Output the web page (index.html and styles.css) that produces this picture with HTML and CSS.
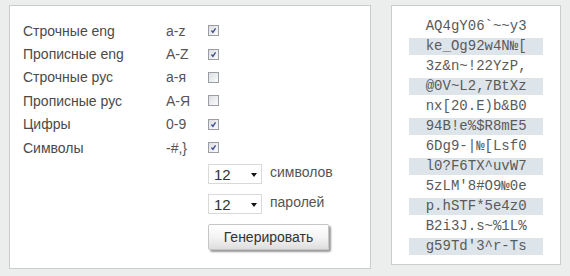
FILE: index.html
```html
<!DOCTYPE html>
<html lang="ru">
<head>
  <meta charset="UTF-8">
  <title>Генератор паролей</title>
  <link rel="stylesheet" href="styles.css">
</head>
<body>

  <div class="page">
    <!-- Settings -->
    <div class="panel settings">
      <div class="options">
        <span class="label">Строчные eng</span><span class="range">a-z</span>
        <span class="check checked"><svg viewBox="0 0 11 11"><path d="M3 5.5 L4.8 7.8 L8 2.8" /></svg></span>

        <span class="label">Прописные eng</span><span class="range">A-Z</span>
        <span class="check checked"><svg viewBox="0 0 11 11"><path d="M3 5.5 L4.8 7.8 L8 2.8" /></svg></span>

        <span class="label">Строчные рус</span><span class="range">а-я</span>
        <span class="check"></span>

        <span class="label">Прописные рус</span><span class="range">А-Я</span>
        <span class="check"></span>

        <span class="label">Цифры</span><span class="range">0-9</span>
        <span class="check checked"><svg viewBox="0 0 11 11"><path d="M3 5.5 L4.8 7.8 L8 2.8" /></svg></span>

        <span class="label">Символы</span><span class="range">-#,}</span>
        <span class="check checked"><svg viewBox="0 0 11 11"><path d="M3 5.5 L4.8 7.8 L8 2.8" /></svg></span>
      </div>

      <div class="controls">
        <div class="control-row">
          <span class="select-wrap">
            <select class="select"><option>12</option></select>
          </span>
          <span class="control-label">символов</span>
        </div>
        <div class="control-row">
          <span class="select-wrap">
            <select class="select"><option>12</option></select>
          </span>
          <span class="control-label">паролей</span>
        </div>
        <button class="generate">Генерировать</button>
      </div>
    </div>

    <!-- Result -->
    <div class="panel result">
      <ul class="passwords">
        <li>AQ4gY06`~~y3</li>
        <li>ke_Og92w4N№[</li>
        <li>3z&amp;n~!22YzP,</li>
        <li>@0V~L2,7BtXz</li>
        <li>nx[20.E)b&amp;B0</li>
        <li>94B!e%$R8mE5</li>
        <li>6Dg9-|№[Lsf0</li>
        <li>l0?F6TX^uvW7</li>
        <li>5zLM'8#O9№0e</li>
        <li>p.hSTF*5e4z0</li>
        <li>B2i3J.s~%1L%</li>
        <li>g59Td'3^r-Ts</li>
      </ul>
    </div>
  </div>

</body>
</html>
```

FILE: styles.css
```css
* {
  margin: 0;
  padding: 0;
  box-sizing: border-box;
}

body {
  background: #eceeee;
  font-family: 'Liberation Sans', Arial, sans-serif;
  color: #4a4a4a;
}

.page {
  display: flex;
  align-items: flex-start;
  gap: 20px;
  padding: 5px 9px;
}

.panel {
  background: #fff;
  border: 1px solid #c9cdcd;
}

/* Settings panel */
.settings {
  width: 363px;
  height: 264px;
  padding: 13px 0 0 13px;
}

.options {
  display: grid;
  grid-template-columns: 143px 42px 11px;
  grid-auto-rows: 23.4px;
  align-items: center;
  font-size: 14px;
}

.range {
  color: #555;
}

.check {
  width: 11px;
  height: 11px;
  border: 1px solid #9a9ea4;
  background: linear-gradient(135deg, #dcdfe2, #fbfbfb);
  display: flex;
}

.check svg {
  width: 9px;
  height: 9px;
}

.check path {
  fill: none;
  stroke: #3a4a8c;
  stroke-width: 1.6;
}

.controls {
  margin: 5px 0 0 185px;
  display: flex;
  flex-direction: column;
  align-items: flex-start;
  gap: 10px;
}

.control-row {
  display: flex;
  align-items: flex-start;
  gap: 8px;
  height: 20px;
}

.control-label {
  font-size: 14px;
  color: #555;
  line-height: 17px;
}

.select-wrap {
  position: relative;
  display: flex;
}

.select-wrap::after {
  content: '';
  position: absolute;
  right: 5px;
  top: 9px;
  border-left: 3.5px solid transparent;
  border-right: 3.5px solid transparent;
  border-top: 4px solid #111;
}

.select {
  appearance: none;
  -webkit-appearance: none;
  width: 54px;
  height: 20px;
  border: 1px solid #d8dada;
  background: #fff;
  font-family: 'Liberation Sans', Arial, sans-serif;
  font-size: 15px;
  color: #333;
  padding: 1px 0 0 5px;
  border-radius: 0;
}

.generate {
  width: 121px;
  height: 26px;
  border: 1px solid #c6c6c6;
  border-radius: 2px;
  background: linear-gradient(#ffffff, #f4f4f4 50%, #dedede);
  box-shadow: 2px 2px 2px #9a9a9a;
  font-family: 'Liberation Sans', Arial, sans-serif;
  font-size: 14px;
  color: #333;
}

/* Result panel */
.result {
  width: 170px;
  height: 260px;
  padding: 9px 17px 0;
}

.passwords {
  list-style: none;
  font-family: 'Liberation Mono', 'Courier New', monospace;
  font-size: 14px;
  color: #5a5a5a;
  text-align: center;
}

.passwords li {
  height: 17px;
  line-height: 17px;
  margin-top: 3px;
}

.passwords li:nth-child(even) {
  background: #dde4ea;
}
```
